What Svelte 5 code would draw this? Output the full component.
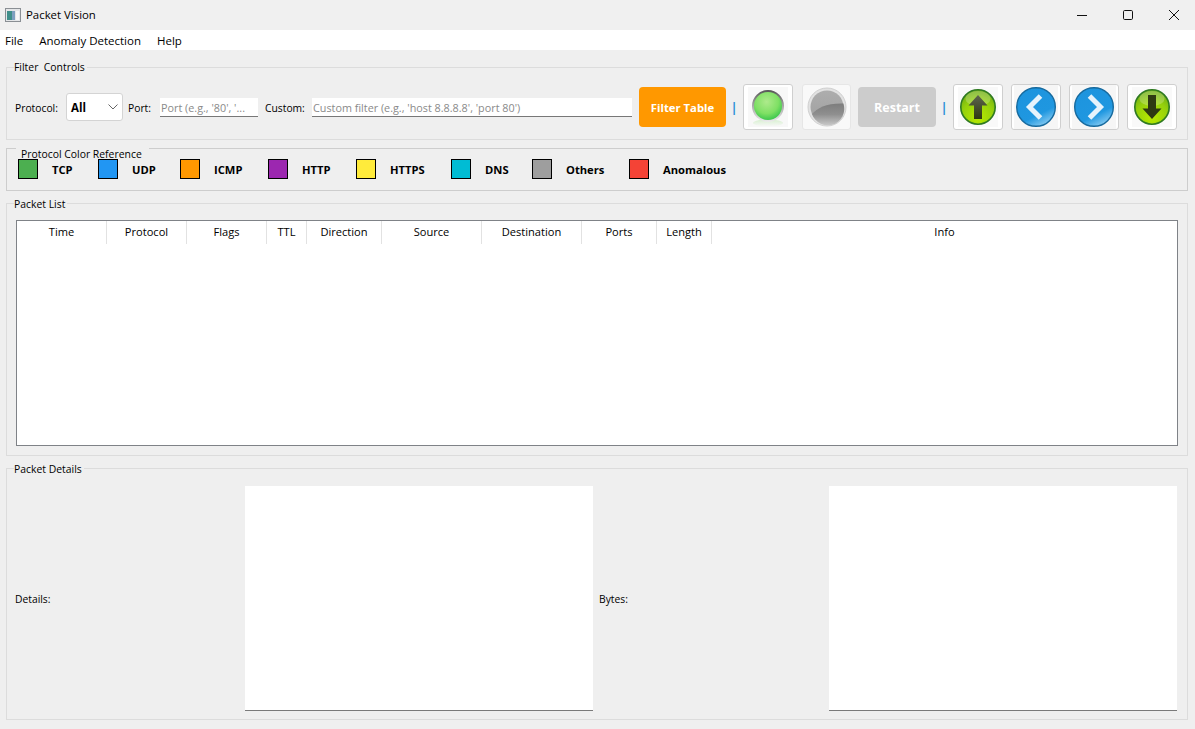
<script lang="ts">
    const columns = [
        { name: 'Time', width: 90 },
        { name: 'Protocol', width: 80 },
        { name: 'Flags', width: 80 },
        { name: 'TTL', width: 40 },
        { name: 'Direction', width: 75 },
        { name: 'Source', width: 100 },
        { name: 'Destination', width: 100 },
        { name: 'Ports', width: 75 },
        { name: 'Length', width: 55 }
    ];

    const legend = [
        { name: 'TCP', color: '#4caf50', width: 21 },
        { name: 'UDP', color: '#2196f3', width: 23 },
        { name: 'ICMP', color: '#ff9800', width: 29 },
        { name: 'HTTP', color: '#9c27b0', width: 29 },
        { name: 'HTTPS', color: '#ffeb3b', width: 36 },
        { name: 'DNS', color: '#00bcd4', width: 22 },
        { name: 'Others', color: '#9e9e9e', width: 38 },
        { name: 'Anomalous', color: '#f44336', width: 63 }
    ];
</script>

<div class="window">
    <header class="titlebar">
        <svg class="app-icon" width="16" height="14" viewBox="0 0 16 14">
            <rect x="0.5" y="0.5" width="15" height="13" fill="#e4e6e8" stroke="#8a8f94" />
            <rect x="2" y="3" width="5" height="9" fill="#3f8f8a" />
            <rect x="7" y="3" width="3" height="9" fill="#7d9fc0" />
            <rect x="11" y="3" width="3" height="9" fill="#f6f7f8" />
        </svg>
        <span class="app-title">Packet Vision</span>
        <div class="win-controls">
            <svg width="12" height="12" viewBox="0 0 12 12"><path d="M1 6.5h10" stroke="#111" stroke-width="1" /></svg>
            <svg width="12" height="12" viewBox="0 0 12 12"><rect x="1.5" y="1.5" width="9" height="9" rx="1.2" fill="none" stroke="#111" /></svg>
            <svg width="12" height="12" viewBox="0 0 12 12"><path d="M1 1l10 10M11 1L1 11" stroke="#111" stroke-width="1" /></svg>
        </div>
    </header>

    <nav class="menubar">
        <span>File</span>
        <span>Anomaly Detection</span>
        <span>Help</span>
    </nav>

    <main class="content">
        <section class="group filter-group">
            <div class="group-title filter-title">Filter&nbsp; Controls</div>
            <label class="field-label proto-label" for="proto">Protocol:</label>
            <div class="combo" id="proto">
                <span class="combo-value">All</span>
                <svg width="10" height="6" viewBox="0 0 10 6"><path d="M0.5 0.5L5 5l4.5-4.5" fill="none" stroke="#666" /></svg>
            </div>
            <span class="field-label port-label">Port:</span>
            <div class="line-input port-input">Port (e.g., '80', '...</div>
            <span class="field-label custom-label">Custom:</span>
            <div class="line-input custom-input">Custom filter (e.g., 'host 8.8.8.8', 'port 80')</div>
            <button class="action filter-btn">Filter Table</button>
            <span class="sep">|</span>
            <button class="icon-btn">
                <svg width="40" height="40" viewBox="0 0 40 40">
                    <defs>
                        <radialGradient id="greenOrb" cx="0.45" cy="0.35" r="0.65">
                            <stop offset="0" stop-color="#aeea8c" />
                            <stop offset="0.65" stop-color="#7fe064" />
                            <stop offset="1" stop-color="#3fc84e" />
                        </radialGradient>
                        <linearGradient id="metal" x1="0" y1="0" x2="0" y2="1">
                            <stop offset="0" stop-color="#555" />
                            <stop offset="0.5" stop-color="#a8a8a8" />
                            <stop offset="1" stop-color="#ececec" />
                        </linearGradient>
                        <linearGradient id="glow" x1="0" y1="0" x2="0" y2="1">
                            <stop offset="0" stop-color="#d8f0d0" />
                            <stop offset="1" stop-color="#f8f8f8" />
                        </linearGradient>
                    </defs>
                    <rect width="40" height="40" fill="#f8f8f8" />
                    <ellipse cx="20" cy="36" rx="15" ry="3.5" fill="url(#glow)" />
                    <circle cx="20" cy="19" r="16" fill="url(#metal)" />
                    <circle cx="20" cy="19" r="14" fill="url(#greenOrb)" />
                </svg>
            </button>
            <button class="icon-btn off">
                <svg width="40" height="40" viewBox="0 0 40 40">
                    <defs>
                        <linearGradient id="grayTop" x1="0" y1="0" x2="0" y2="1">
                            <stop offset="0" stop-color="#adadad" />
                            <stop offset="1" stop-color="#a0a0a0" />
                        </linearGradient>
                        <linearGradient id="grayLow" x1="0" y1="0" x2="0" y2="1">
                            <stop offset="0" stop-color="#7d7d7d" />
                            <stop offset="0.5" stop-color="#8f8f8f" />
                            <stop offset="1" stop-color="#c8c8c8" />
                        </linearGradient>
                    </defs>
                    <circle cx="20" cy="20" r="19" fill="#e2e2e2" stroke="#cfcfcf" />
                    <circle cx="20" cy="20" r="16.5" fill="url(#grayTop)" />
                    <path d="M5 27C10 21 20 16 36.4 16.5A16.5 16.5 0 0 1 5 27Z" fill="url(#grayLow)" />
                </svg>
            </button>
            <button class="action restart-btn">Restart</button>
            <span class="sep">|</span>
            <button class="icon-btn">
                <svg width="40" height="40" viewBox="0 0 40 40">
                    <defs>
                        <radialGradient id="lime" cx="0.5" cy="0.8" r="0.8">
                            <stop offset="0" stop-color="#b8ea00" />
                            <stop offset="0.6" stop-color="#94d00c" />
                            <stop offset="1" stop-color="#6aa818" />
                        </radialGradient>
                        <linearGradient id="arrowUp" x1="0" y1="0" x2="0" y2="1">
                            <stop offset="0" stop-color="#5e6450" />
                            <stop offset="1" stop-color="#2f3a10" />
                        </linearGradient>
                    </defs>
                    <rect width="40" height="40" fill="#f9f9f9" />
                    <circle cx="20" cy="20" r="17.2" fill="url(#lime)" stroke="#2f7a22" stroke-width="1.6" />
                    <ellipse cx="20" cy="11.5" rx="12.5" ry="7.5" fill="#fff" opacity="0.22" />
                    <path d="M20 8L29.5 18.5H24V32H16V18.5H10.5Z" fill="url(#arrowUp)" />
                </svg>
            </button>
            <button class="icon-btn spaced">
                <svg width="44" height="44" viewBox="0 0 44 44">
                    <defs>
                        <linearGradient id="blue" x1="0.2" y1="0" x2="0.7" y2="1">
                            <stop offset="0" stop-color="#1d94de" />
                            <stop offset="0.7" stop-color="#1f97e0" />
                            <stop offset="1" stop-color="#8accf2" />
                        </linearGradient>
                    </defs>
                    <rect width="44" height="44" fill="#f6f6f6" />
                    <circle cx="22" cy="22" r="19.3" fill="url(#blue)" stroke="#166a9e" stroke-width="1.4" />
                    <path d="M26.5 11L15.5 22L26.5 33" fill="none" stroke="#e6f3fc" stroke-width="5" />
                </svg>
            </button>
            <button class="icon-btn spaced">
                <svg width="44" height="44" viewBox="0 0 44 44">
                    <rect width="44" height="44" fill="#f6f6f6" />
                    <circle cx="22" cy="22" r="19.3" fill="url(#blue)" stroke="#166a9e" stroke-width="1.4" />
                    <path d="M17.5 11L28.5 22L17.5 33" fill="none" stroke="#e6f3fc" stroke-width="5" />
                </svg>
            </button>
            <button class="icon-btn spaced">
                <svg width="40" height="40" viewBox="0 0 40 40">
                    <rect width="40" height="40" fill="#f9f9f9" />
                    <circle cx="20" cy="20" r="17.2" fill="url(#lime)" stroke="#2f7a22" stroke-width="1.6" />
                    <ellipse cx="20" cy="11.5" rx="12.5" ry="7.5" fill="#fff" opacity="0.22" />
                    <path d="M20 32L29.5 21.5H24V8H16V21.5H10.5Z" fill="#2e3a12" />
                </svg>
            </button>
        </section>

        <section class="group legend-group">
            <div class="group-title legend-title">Protocol Color Reference</div>
            {#each legend as item}
                <div class="legend-item">
                    <span class="swatch" style="background: {item.color}"></span>
                    <span class="legend-name" style="width: {item.width}px">{item.name}</span>
                </div>
            {/each}
        </section>

        <section class="group list-group">
            <div class="group-title">Packet List</div>
            <div class="table">
                <div class="table-head">
                    {#each columns as col}
                        <div class="th" style="width: {col.width}px">{col.name}</div>
                    {/each}
                    <div class="th last">Info</div>
                </div>
            </div>
        </section>

        <section class="group details-group">
            <div class="group-title">Packet Details</div>
            <span class="field-label">Details:</span>
            <div class="text-box"></div>
            <span class="field-label bytes-label">Bytes:</span>
            <div class="text-box"></div>
        </section>
    </main>
</div>

<style>
    :global(body) {
        margin: 0;
        background: #efefef;
    }

    .window {
        width: 1195px;
        height: 729px;
        overflow: hidden;
        font-family: "Open Sans", "Noto Sans", sans-serif;
        font-size: 10.3px;
        color: #000;
        background: #efefef;
    }

    .titlebar {
        height: 30px;
        background: #f0f0f0;
        display: flex;
        align-items: center;
        padding-left: 5px;
        box-sizing: border-box;
    }

    .app-icon {
        margin-right: 5px;
    }

    .app-title {
        font-size: 11.4px;
        margin-bottom: 2px;
    }

    .win-controls {
        margin-left: auto;
        margin-right: 15px;
        display: flex;
        gap: 34px;
    }

    .menubar {
        height: 20px;
        background: #fff;
        display: flex;
        align-items: center;
        gap: 16px;
        padding-left: 5px;
        font-size: 11.5px;
    }

    .content {
        padding: 17px 7px 0 6px;
        display: flex;
        flex-direction: column;
    }

    .group {
        position: relative;
        border: 1px solid #dcdcdc;
        box-sizing: border-box;
    }

    .group-title {
        position: absolute;
        top: -7px;
        left: 7px;
        background: #efefef;
        padding-right: 2px;
        line-height: 15px;
        font-size: 10.4px;
    }

    .filter-title {
        top: -8px;
    }

    .filter-group {
        height: 73px;
        display: flex;
        align-items: center;
        padding: 6px 0 0 8px;
    }

    .field-label {
        white-space: nowrap;
    }

    .filter-group .field-label {
        margin-top: 2px;
    }

    .proto-label {
        width: 43px;
    }

    .combo {
        width: 57px;
        height: 28px;
        margin-left: 8px;
        box-sizing: border-box;
        background: #fff;
        border: 1px solid #d4d4d4;
        border-radius: 3px;
        display: flex;
        align-items: center;
        justify-content: space-between;
        padding: 0 4px;
        font-weight: 700;
        font-size: 11.5px;
    }

    .combo-value {
        padding-top: 1px;
    }

    .port-label {
        width: 25px;
        margin-left: 5px;
    }

    .line-input {
        height: 19px;
        margin-top: 2px;
        box-sizing: border-box;
        background: #fff;
        border-bottom: 1px solid #777;
        color: #8a8a8a;
        padding-left: 1px;
        line-height: 20px;
        font-size: 10.8px;
        white-space: nowrap;
        overflow: hidden;
    }

    .port-input {
        width: 98px;
        margin-left: 7px;
    }

    .custom-label {
        width: 39px;
        margin-left: 7px;
    }

    .custom-input {
        width: 320px;
        margin-left: 8px;
    }

    .action {
        height: 40px;
        border: none;
        border-radius: 4px;
        color: #fff;
        font-family: inherit;
        font-weight: 700;
        padding: 2px 0 0;
    }

    .filter-btn {
        width: 87px;
        margin-left: 7px;
        background: #ff9800;
        font-size: 11.3px;
    }

    .restart-btn {
        width: 78px;
        margin-left: 7px;
        background: #cccccc;
        font-size: 12.5px;
    }

    .sep {
        width: 8px;
        margin: 0 5px 0 4px;
        text-align: center;
        color: #2f8fd8;
        font-size: 13px;
        font-weight: 700;
    }

    .icon-btn {
        width: 50px;
        height: 46px;
        padding: 0;
        box-sizing: border-box;
        background: #fff;
        border: 1px solid #cfcfcf;
        border-radius: 3px;
        display: flex;
        align-items: center;
        justify-content: center;
        flex: none;
    }

    .icon-btn.off {
        width: 49px;
        margin-left: 9px;
        border-color: #e6e6e6;
        background: #f9f9f9;
    }

    .spaced {
        margin-left: 8px;
    }

    .legend-group {
        height: 43px;
        margin-top: 8px;
        border-color: #cdcdcd;
        display: flex;
        align-items: flex-start;
        gap: 25px;
        padding: 10px 0 0 11px;
    }

    .legend-title {
        top: -2px;
        left: 9px;
        height: 12px;
        padding: 0 7px 0 5px;
    }

    .legend-item {
        display: flex;
        align-items: center;
        gap: 14px;
    }

    .swatch {
        width: 20px;
        height: 20px;
        box-sizing: border-box;
        border: 1px solid #000;
    }

    .legend-name {
        font-weight: 700;
        font-size: 11.2px;
        white-space: nowrap;
    }

    .list-group {
        height: 253px;
        margin-top: 12px;
        padding: 16px 9px 0 9px;
    }

    .table {
        height: 226px;
        box-sizing: border-box;
        background: #fff;
        border: 1px solid #7f8287;
    }

    .table-head {
        display: flex;
        height: 23px;
        font-size: 11.1px;
    }

    .th {
        box-sizing: border-box;
        border-right: 1px solid #e2e2e2;
        text-align: center;
        line-height: 22px;
    }

    .th.last {
        flex: 1;
        border-right: none;
    }

    .details-group {
        height: 252px;
        margin-top: 12px;
        display: grid;
        grid-template-columns: 230px 348px 236px 348px;
        align-items: center;
        padding: 17px 0 8px 8px;
    }

    .bytes-label {
        margin-left: 6px;
    }

    .text-box {
        height: 225px;
        box-sizing: border-box;
        background: #fff;
        border-bottom: 1px solid #7a7a7a;
    }
</style>
